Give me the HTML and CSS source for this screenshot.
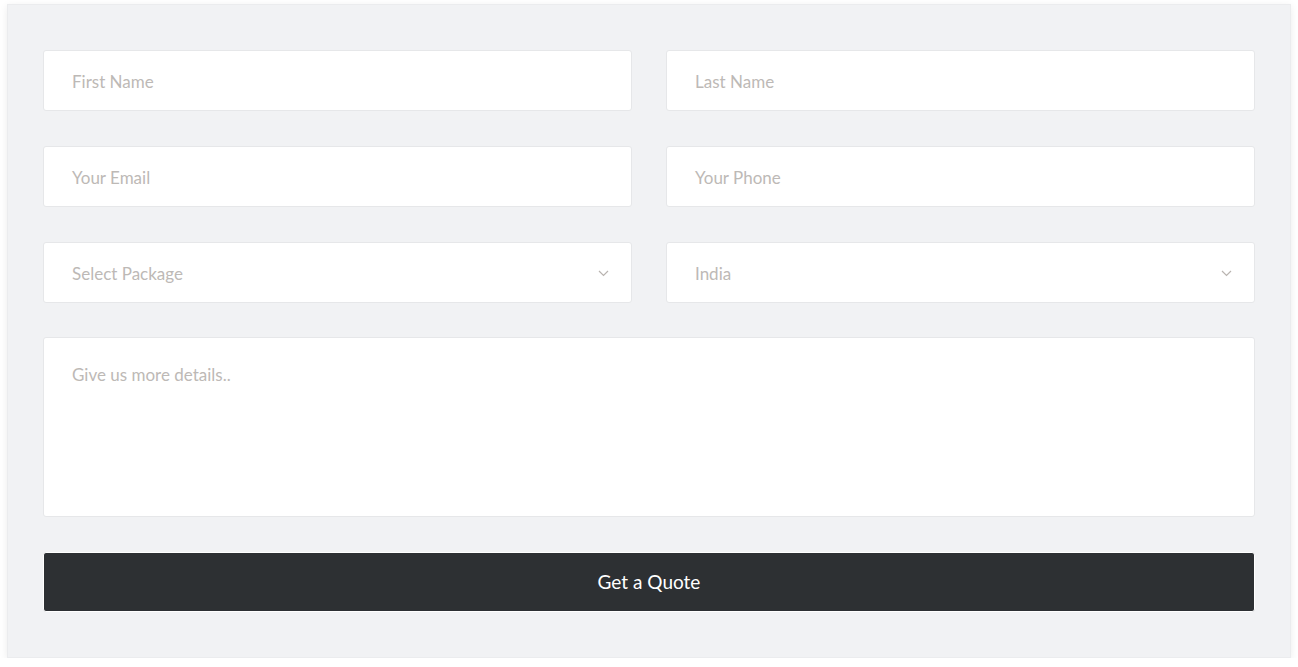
FILE: index.html
```html
<!DOCTYPE html>
<html>
<head>
<meta charset="utf-8">
<link rel="stylesheet" href="styles.css">
</head>
<body>
<form class="card">
  <div class="grid">
    <div class="field"><span class="ph">First Name</span></div>
    <div class="field"><span class="ph">Last Name</span></div>
    <div class="field"><span class="ph">Your Email</span></div>
    <div class="field"><span class="ph">Your Phone</span></div>
    <div class="field select"><span class="ph">Select Package</span>
      <svg class="chev" width="11" height="7" viewBox="0 0 11 7"><path d="M1 1l4.5 4.5L10 1" fill="none" stroke="#b9b4b0" stroke-width="1.2"/></svg>
    </div>
    <div class="field select"><span class="ph">India</span>
      <svg class="chev" width="11" height="7" viewBox="0 0 11 7"><path d="M1 1l4.5 4.5L10 1" fill="none" stroke="#b9b4b0" stroke-width="1.2"/></svg>
    </div>
    <div class="field area"><span class="ph">Give us more details..</span></div>
    <div class="btn">Get a Quote</div>
  </div>
</form>
</body>
</html>
```
FILE: styles.css
```css
html, body { margin: 0; padding: 0; background: #fff; }
body { font-family: "Lato", "Open Sans", sans-serif; }
.card {
  margin: 4px 0 0 7px;
  width: 1284px;
  box-sizing: border-box;
  padding: 45px 35px 45px;
  background: #f1f2f4;
  border: 1px solid #ebecee;
  box-shadow: 0 2px 8px rgba(0,0,0,0.08);
}
.grid {
  display: grid;
  grid-template-columns: 589px 589px;
  column-gap: 34px;
  row-gap: 35px;
}
.field {
  height: 61px;
  box-sizing: border-box;
  background: #fff;
  border: 1px solid #e6e7e9;
  border-radius: 3px;
  display: flex;
  align-items: center;
  padding: 2px 22px 0 28px;
  justify-content: space-between;
}
.ph { color: #bdb9b6; font-size: 17px; }
.area {
  grid-column: 1 / 3;
  height: 180px;
  margin-top: -1px;
  align-items: flex-start;
  padding-top: 26px;
}
.btn {
  grid-column: 1 / 3;
  height: 60px;
  box-sizing: border-box;
  background: #2d3033;
  border: 1px solid #fff;
  border-radius: 3px;
  color: #fff;
  font-size: 19px;
  display: flex;
  align-items: center;
  justify-content: center;
  padding-bottom: 1px;
}
```
